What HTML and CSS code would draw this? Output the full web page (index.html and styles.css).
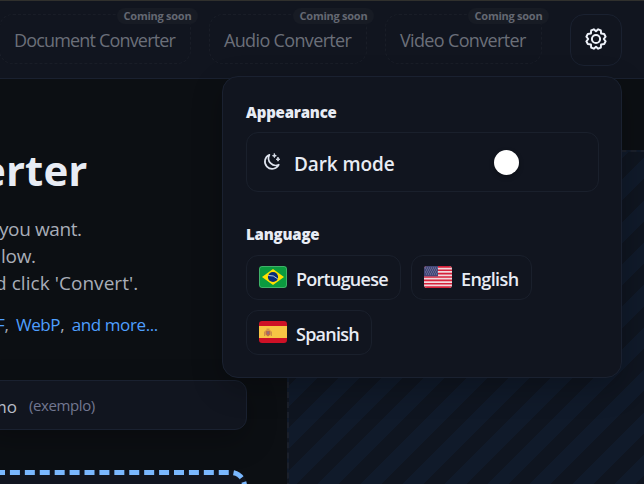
FILE: index.html
```
<!DOCTYPE html>
<html lang="en">
<head>
<meta charset="utf-8">
<title>Converter</title>
<link rel="stylesheet" href="styles.css">
</head>
<body>
<header class="topbar">
  <nav class="tabs">
    <a class="tab tab-doc"><span class="tab-label">Document Converter</span><span class="badge">Coming soon</span></a>
    <a class="tab tab-audio"><span class="tab-label">Audio Converter</span><span class="badge">Coming soon</span></a>
    <a class="tab tab-video"><span class="tab-label">Video Converter</span><span class="badge">Coming soon</span></a>
  </nav>
  <button class="gear" aria-label="Settings">
    <svg width="22" height="22" viewBox="0 0 22 22" fill="none" stroke="#eef2fa" stroke-width="2" stroke-linejoin="round"><path d="M8.8 1.3 L11 3.2 L13.2 1.3 L15.8 2.4 L16.1 5.6 L19.2 6 L20.6 8.7 L18.8 11 L20.6 13.3 L19.2 16 L16.1 16.4 L15.8 19.6 L13.2 20.7 L11 18.8 L8.8 20.7 L6.2 19.6 L5.9 16.4 L2.8 16 L1.4 13.3 L3.2 11 L1.4 8.7 L2.8 6 L5.9 5.6 L6.2 2.4 Z"/><circle cx="11" cy="11" r="4.1"/></svg>
  </button>
  <div class="popup">
    <h2 class="popup-title">Appearance</h2>
    <div class="mode">
      <svg class="moon" width="18" height="18" viewBox="0 0 18 18" fill="none" stroke="#dfe4ee" stroke-width="1.7" stroke-linecap="round" stroke-linejoin="round"><path d="M6.4 1.8A7.3 7.3 0 1 0 15.8 11.7A7.2 7.2 0 0 1 6.4 1.8Z"/><path d="M11.4 .8l.5 1.4 1.4.5-1.4.5-.5 1.4-.5-1.4-1.4-.5 1.4-.5zM15 4.4l.5 1.4 1.4.5-1.4.5-.5 1.4-.5-1.4-1.4-.5 1.4-.5z" fill="#dfe4ee" stroke-width=".9"/></svg>
      <span class="mode-label">Dark mode</span>
      <span class="knob"></span>
    </div>
    <h2 class="popup-title lang-title">Language</h2>
    <div class="langs">
      <button class="lang pt">
        <svg class="flag" width="28" height="22" viewBox="0 0 28 22"><rect width="28" height="22" fill="#0b9b3f"/><path d="M14 3 25 11 14 19 3 11Z" fill="#ffe000"/><circle cx="14" cy="11" r="5.1" fill="#082c78"/><path d="M9.3 9.5Q14.5 8.8 18.7 12.8" fill="none" stroke="#c8d8e8" stroke-width=".9"/><rect x=".5" y=".5" width="27" height="21" rx="2.5" fill="none" stroke="#fff" stroke-opacity=".22"/></svg>
        <span>Portuguese</span>
      </button>
      <button class="lang en">
        <svg class="flag" width="28" height="22" viewBox="0 0 28 22"><rect width="28" height="22" fill="#f1d8dc"/><path d="M0 .85h28M0 4.23h28M0 7.61h28M0 11h28M0 14.38h28M0 17.76h28M0 21.15h28" stroke="#d5213a" stroke-width="1.7"/><rect width="14" height="10.3" fill="#434777"/><path d="M1 2h13M2 4h12M1 6h13M2 8h12" stroke="#9294b3" stroke-width=".8" stroke-dasharray="1 1"/></svg>
        <span>English</span>
      </button>
      <button class="lang es">
        <svg class="flag" width="28" height="22" viewBox="0 0 28 22"><rect width="28" height="22" fill="#ce1126"/><rect y="5" width="28" height="12" fill="#f6c544"/><path d="M6.5 9.5h5v4l-2.5 2-2.5-2z" fill="#bd6b4b"/><path d="M7.5 8.2h3M5.7 10.5v4.5M12.3 10.5v4.5" stroke="#c58348"/><rect x="8.3" y="10.5" width="1.5" height="2.5" fill="#876f85"/></svg>
        <span>Spanish</span>
      </button>
    </div>
  </div>
</header>
<main class="page">
  <section class="intro">
    <h1 class="title">erter</h1>
    <div class="copy">
      <p class="l1">you want.</p>
      <p class="l2">low.</p>
      <p class="l3">d click 'Convert'.</p>
    </div>
    <p class="formats"><span class="fmt">F</span>, <a>WebP</a>, <a class="more">and more...</a></p>
    <div class="field"><span class="value">mo</span><span class="hint">(exemplo)</span></div>
    <div class="drop"></div>
  </section>
  <aside class="ad"></aside>
</main>
</body>
</html>
```
FILE: styles.css
```
* { box-sizing: border-box; }
body {
  margin: 0;
  width: 644px;
  height: 484px;
  overflow: hidden;
  background: #0c0f13;
  color: #e8ecf4;
  font-family: "Open Sans", "Noto Sans", sans-serif;
}
h1, h2, p { margin: 0; }
button { font: inherit; color: inherit; margin: 0; background: #11151f; }
.topbar {
  position: relative;
  z-index: 2;
  display: flex;
  align-items: flex-start;
  height: 79px;
  padding-top: 13px;
  background: #11151f;
  border-top: 1px solid #30302d;
  border-bottom: 1px solid #1a2130;
}
.tabs { display: flex; gap: 18px; margin-left: -1px; }
.tab {
  position: relative;
  display: flex;
  align-items: center;
  height: 50px;
  padding-left: 14px;
  border: 1px dashed #191d27;
  border-radius: 14px;
  color: #6b6f79;
  font-size: 18px;
  letter-spacing: -.65px;
  white-space: nowrap;
}
.tab-label { position: relative; top: 1px; }
.tab-doc { width: 192px; letter-spacing: -.83px; }
.tab-audio { width: 158px; }
.tab-video { width: 157px; }
.badge {
  position: absolute;
  top: -7px;
  right: -8px;
  width: 81px;
  height: 16px;
  border-radius: 8px;
  background: #171b24;
  color: #646872;
  font-size: 11px;
  font-weight: 700;
  line-height: 16px;
  letter-spacing: -.25px;
  text-align: center;
}
.gear {
  display: flex;
  align-items: center;
  justify-content: center;
  width: 52px;
  height: 52px;
  margin-left: 28px;
  padding: 0 0 2px;
  border: 1px solid #1a2130;
  border-radius: 14px;
}
.popup {
  position: absolute;
  left: 222px;
  top: 75px;
  width: 400px;
  height: 302px;
  padding: 24px 22px 0 23px;
  border: 1px solid #1a2130;
  border-radius: 16px;
  background: #11151f;
  box-shadow: 0 10px 30px rgba(0,0,0,.25);
}
.popup-title { font-size: 15px; line-height: 22px; font-weight: 800; letter-spacing: -.2px; }
.mode {
  display: flex;
  align-items: center;
  height: 60px;
  margin-top: 9px;
  width: 353px;
  padding-left: 16px;
  border: 1px solid #1a202c;
  border-radius: 12px;
}
.mode-label { margin: 4px 0 0 13px; width: 200px; font-size: 19px; font-weight: 600; letter-spacing: -.1px; }
.knob { width: 25px; height: 25px; border-radius: 50%; background: #fff; box-shadow: 0 2px 5px rgba(0,0,0,.3); }
.lang-title { margin-top: 31px; }
.langs { display: flex; flex-wrap: wrap; gap: 10px; margin-top: 10px; }
.lang {
  display: flex;
  align-items: center;
  gap: 9px;
  height: 45px;
  padding: 0 0 1px 12px;
  border: 1px solid #1a202c;
  border-radius: 12px;
  font-size: 18px;
  font-weight: 600;
  letter-spacing: -.75px;
}
.lang span { padding-top: 3px; }
.pt { width: 155px; }
.en { width: 121px; letter-spacing: -.6px; }
.es { width: 126px; }
.flag { flex: none; border-radius: 3px; }
.page { display: flex; height: 405px; overflow: hidden; }
.intro { width: 287px; flex: none; padding-top: 61px; }
.title { margin-left: -19px; font-size: 42px; line-height: 60px; font-weight: 700; letter-spacing: .1px; color: #e8ecf4; }
.copy { margin-top: 16px; color: #a8adb8; font-size: 19px; line-height: 27px; white-space: nowrap; }
.l1 { margin-left: -1px; letter-spacing: -.4px; }
.l2 { margin-left: 1px; letter-spacing: -.3px; }
.l3 { margin-left: -5px; letter-spacing: .05px; }
.formats { margin: 14px 0 0 -4px; font-size: 17px; line-height: 28px; letter-spacing: -.4px; word-spacing: 3.5px; color: #a8adb8; white-space: nowrap; }
.formats a, .fmt { color: #4f9fff; }
.formats .more { word-spacing: 0; }
.field {
  display: flex;
  align-items: center;
  width: 263px;
  height: 50px;
  margin: 41px 0 0 -16px;
  padding-left: 6px;
  border: 1px solid #1a2130;
  border-radius: 12px;
  background: #11151f;
  box-shadow: 0 10px 30px rgba(0,0,0,.25);
}
.value { font-size: 17px; color: #b8bdc8; padding-top: 3px; }
.hint { margin-left: 12px; font-size: 15px; letter-spacing: -.4px; color: #727790; }
.drop { width: 447px; height: 200px; margin: 40px 0 0 -200px; border: 5px dashed #7ab8ff; border-radius: 16px; background: #11151f; }
.ad {
  flex: none;
  width: 400px;
  height: 500px;
  margin-top: 71px;
  border: 2px dashed #1b202b;
  background: repeating-linear-gradient(135deg, #0f1520 0 15px, #101a2a 15px 30px);
}
```
